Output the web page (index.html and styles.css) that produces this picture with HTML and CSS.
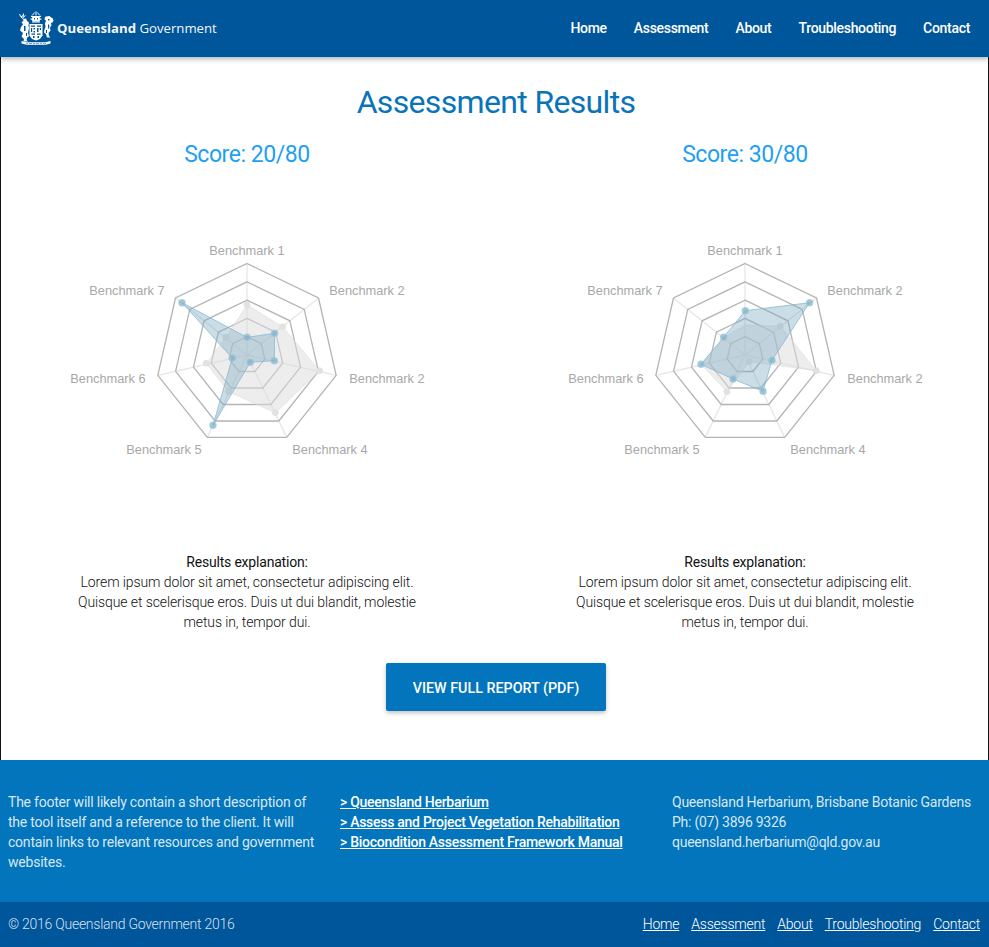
FILE: index.html
```html
<!DOCTYPE html>
<html>
<head>
	<title>Assessment Results</title>
	<link rel="stylesheet" href="styles.css">
</head>
<body>
	<!-- Navigation Bar -->
	<header class="site-header">
		<a class="brand" href="#">
			<svg class="crest" viewBox="0 0 36 34" width="36" height="34">
				<!-- crown and helmet -->
				<g fill="none" stroke="#fff" stroke-width="1">
					<path d="M14 4.500c1-2 2-1 2.500-3M18 .500v4M22 4.500c-1-2-2-1-2.500-3M13 5.500h10M12.500 8c2 1 9 1 11 0M14 11h8"/>
				</g>
				<path fill="#fff" d="M15 5.500h6l1.500 2-1 3h-7l-1-3z"/>
				<path fill="#00569b" d="M16 7h1v1.500h-1zM19 7h1v1.500h-1z"/>
				<!-- stag -->
				<path fill="none" stroke="#fff" stroke-width="1" d="M1.500 3l1.500 3 2.500-2M5.500 2.500L5 6.500l2.500-2M3 6l2.500 2"/>
				<path fill="#fff" d="M5 8l3-.500 1 2.500 2 1.500-.500 3 .500 3-1 4 1 4-1.500.500-1 3 1.500 1.500H5.500l.500-2.500-2.500-2.500L5 22l-3-2.500 1-3.500 2-2.500-1.500-2.500 2-1z"/>
				<path fill="#00569b" d="M6 15h1.500v5H6zM8 22h1v3H8z"/>
				<!-- lion -->
				<path fill="#fff" d="M28 5.500l3.500-.500 1.500 1.500 1.500.500 1 2.500-1 2-1.500.500.500 2.500-1.500 2 .500 3-2 2.500.500 3 1.500 1.500h-3.500l-1-3.500-2-1.500.500-3 1-2.500-.500-3.500 1-3-1.500-1 .500-2.500z"/>
				<path fill="#00569b" d="M30 8h1.500v1.500H30zM30 13.500h1.200v4H30zM28 19h1v3h-1z"/>
				<!-- shield -->
				<path fill="#fff" d="M11.500 13h13v11.500l-2.500 3.500-4 1.500-4-1.500-2.500-3.500z"/>
				<g fill="#00569b">
					<path d="M13 14.500h4v1.200h-4zM19 14.500h4v1.200h-4zM13 17h1.200v4H13zM15.500 17h1.500v1.500h-1.500zM19 17h1.500v4H19zM21.800 17H23v2h-1.200zM15.500 20h1.500v1.500h-1.500z"/>
					<path d="M13.500 22.500h3.500v1.200h-3.500zM19 22.500h3.500v1.200H19zM15 25h1.500v2H15zM19.500 25H21v2h-1.500z"/>
				</g>
				<!-- motto ribbon -->
				<path fill="#fff" d="M3.500 30l5 1.200h19l5-1.200v2.500l-5 1.300h-19l-5-1.300z"/>
				<path fill="#00569b" d="M8 32h2v.6H8zM11 32h3v.6h-3zM15 32h2v.6h-2zM18 32h3v.6h-3zM22 32h2v.6h-2zM25 32h3v.6h-3z"/>
			</svg>
			<span class="brand-name"><b>Queensland</b> Government</span>
		</a>
		<nav class="main-nav">
			<a href="#">Home</a>
			<a href="#">Assessment</a>
			<a href="#">About</a>
			<a href="#">Troubleshooting</a>
			<a href="#">Contact</a>
		</nav>
	</header>

	<main class="content">
		<div class="results">
			<h1>Assessment Results</h1>

			<div class="result-columns">
				<!-- First assessment -->
				<section class="result">
					<h2>Score: 20/80</h2>
					<svg class="radar" viewBox="-238 -175 476 360" width="476" height="360">
						<g id="radar-grid">
							<g class="spokes">
								<line x2="0" y2="-91.500"/>
								<line x2="71.500" y2="-57"/>
								<line x2="89.200" y2="20.400"/>
								<line x2="39.700" y2="82.400"/>
								<line x2="-39.700" y2="82.400"/>
								<line x2="-89.200" y2="20.400"/>
								<line x2="-71.500" y2="-57"/>
							</g>
							<g class="rings">
								<polygon points="0,-18.300 14.300,-11.400 17.800,4.100 7.900,16.500 -7.900,16.500 -17.800,4.100 -14.300,-11.400"/>
								<polygon points="0,-36.600 28.600,-22.800 35.700,8.100 15.900,33 -15.900,33 -35.700,8.100 -28.600,-22.800"/>
								<polygon points="0,-54.900 42.900,-34.200 53.500,12.200 23.800,49.500 -23.800,49.500 -53.500,12.200 -42.900,-34.200"/>
								<polygon points="0,-73.200 57.200,-45.600 71.400,16.300 31.800,66 -31.800,66 -71.400,16.300 -57.200,-45.600"/>
								<polygon points="0,-91.500 71.500,-57 89.200,20.400 39.700,82.400 -39.700,82.400 -89.200,20.400 -71.500,-57"/>
							</g>
						</g>
						<polygon class="area-grey" points="0,-50 35.600,-28.300 72.600,15.700 28.300,57.700 -18.400,36.700 -40.700,8.300 -21,-17.700"/>
						<g class="dots-grey">
							<circle cx="0" cy="-50" r="3"/>
							<circle cx="35.600" cy="-28.300" r="3"/>
							<circle cx="72.600" cy="15.700" r="3"/>
							<circle cx="28.300" cy="57.700" r="3"/>
							<circle cx="-18.400" cy="36.700" r="3"/>
							<circle cx="-40.700" cy="8.300" r="3"/>
							<circle cx="-21" cy="-17.700" r="3"/>
						</g>
						<polygon class="area-blue" points="0,-17.700 27.600,-21.700 27.300,5.700 3.300,7.300 -34,70.300 -14.700,3 -65,-52.300"/>
						<g class="dots-blue">
							<circle cx="0" cy="-17.700" r="3"/>
							<circle cx="27.600" cy="-21.700" r="3"/>
							<circle cx="27.300" cy="5.700" r="3"/>
							<circle cx="3.300" cy="7.300" r="3"/>
							<circle cx="-34" cy="70.300" r="3"/>
							<circle cx="-14.700" cy="3" r="3"/>
							<circle cx="-65" cy="-52.300" r="3"/>
						</g>
						<g class="labels">
							<text x="0" y="-100">Benchmark 1</text>
							<text x="120" y="-60.500">Benchmark 2</text>
							<text x="140" y="27.500">Benchmark 2</text>
							<text x="83" y="98.500">Benchmark 4</text>
							<text x="-83" y="98.500">Benchmark 5</text>
							<text x="-139" y="27.500">Benchmark 6</text>
							<text x="-120" y="-60.500">Benchmark 7</text>
						</g>
					</svg>
					<p class="explanation">
						<strong>Results explanation:</strong><br>
						Lorem ipsum dolor sit amet, consectetur adipiscing elit. Quisque et scelerisque eros. Duis ut dui blandit, molestie metus in, tempor dui.
					</p>
				</section>

				<!-- Second assessment -->
				<section class="result">
					<h2>Score: 30/80</h2>
					<svg class="radar" viewBox="-238 -175 476 360" width="476" height="360">
						<use href="#radar-grid"/>
						<polygon class="area-grey" points="0,-30 35.300,-29 71.300,15.700 4.300,6.700 -18,36.700 -44,9.300 -21,-17.700"/>
						<g class="dots-grey">
							<circle cx="35.300" cy="-29" r="3"/>
							<circle cx="71.300" cy="15.700" r="3"/>
							<circle cx="4.300" cy="6.700" r="3"/>
							<circle cx="-18" cy="36.700" r="3"/>
						</g>
						<polygon class="area-blue" points="0.300,-44.300 64.600,-52.300 27,5.300 18,36.300 -12,24 -44,9.300 -21.400,-17.700"/>
						<g class="dots-blue">
							<circle cx="0.300" cy="-44.300" r="3"/>
							<circle cx="64.600" cy="-52.300" r="3"/>
							<circle cx="27" cy="5.300" r="3"/>
							<circle cx="18" cy="36.300" r="3"/>
							<circle cx="-12" cy="24" r="3"/>
							<circle cx="-44" cy="9.300" r="3"/>
							<circle cx="-21.400" cy="-17.700" r="3"/>
						</g>
						<g class="labels">
							<text x="0" y="-100">Benchmark 1</text>
							<text x="120" y="-60.500">Benchmark 2</text>
							<text x="140" y="27.500">Benchmark 2</text>
							<text x="83" y="98.500">Benchmark 4</text>
							<text x="-83" y="98.500">Benchmark 5</text>
							<text x="-139" y="27.500">Benchmark 6</text>
							<text x="-120" y="-60.500">Benchmark 7</text>
						</g>
					</svg>
					<p class="explanation">
						<strong>Results explanation:</strong><br>
						Lorem ipsum dolor sit amet, consectetur adipiscing elit. Quisque et scelerisque eros. Duis ut dui blandit, molestie metus in, tempor dui.
					</p>
				</section>
			</div>

			<a class="report-button" href="#">View full report (PDF)</a>
		</div>
	</main>

	<footer>
		<div class="footer-top">
			<p class="footer-about">The footer will likely contain a short description of the tool itself and a reference to the client. It will contain links to relevant resources and government websites.</p>
			<ul class="footer-links">
				<li><a href="#">&gt; Queensland Herbarium</a></li>
				<li><a href="#">&gt; Assess and Project Vegetation Rehabilitation</a></li>
				<li><a href="#">&gt; Biocondition Assessment Framework Manual</a></li>
			</ul>
			<p class="footer-contact">Queensland Herbarium, Brisbane Botanic Gardens<br>Ph: (07) 3896 9326<br>queensland.herbarium@qld.gov.au</p>
		</div>
		<div class="footer-bottom">
			<span>© 2016 Queensland Government 2016</span>
			<nav class="footer-nav">
				<a href="#">Home</a>
				<a href="#">Assessment</a>
				<a href="#">About</a>
				<a href="#">Troubleshooting</a>
				<a href="#">Contact</a>
			</nav>
		</div>
	</footer>
</body>
</html>
```

FILE: styles.css
```css
body {
	margin: 0;
	font-family: Roboto, "Liberation Sans", sans-serif;
	font-size: 14px;
	letter-spacing: -0.2px;
	line-height: 20px;
	background-color: #fff;
	color: #111;
}

a {
	color: inherit;
}

/* Header */
.site-header {
	position: relative;
	z-index: 1;
	display: flex;
	align-items: center;
	justify-content: space-between;
	height: 57px;
	padding: 0 19px 0 18px;
	background-color: #00569b;
	box-shadow: 0 2px 5px rgba(0, 0, 0, 0.3);
}

.brand {
	display: flex;
	align-items: center;
	gap: 3px;
	padding-bottom: 2px;
	color: #fff;
	text-decoration: none;
	letter-spacing: 0;
}

.brand-name {
	font-family: "Open Sans", sans-serif;
	font-size: 13.200px;
	font-weight: 400;
	opacity: 0.95;
}

.brand-name b {
	font-weight: 700;
}

.main-nav {
	display: flex;
	gap: 27px;
	padding-bottom: 2px;
	letter-spacing: -0.31px;
}

.main-nav a {
	color: #fff;
	font-weight: 500;
	text-decoration: none;
}

/* Results */
.content {
	height: 703px;
	box-sizing: border-box;
	padding: 26px 0 0 8px;
	border-left: 1px solid #111;
	border-right: 1px solid #111;
}

.results {
	width: 974px;
	text-align: center;
}

h1 {
	margin: 0;
	font-size: 32px;
	font-weight: 400;
	letter-spacing: -0.66px;
	line-height: 38px;
	color: #0a74b9;
}

.result-columns {
	display: grid;
	grid-template-columns: 476px 476px;
	gap: 22px;
	margin-top: 20px;
}

.result h2 {
	margin: 0 0 11px;
	font-size: 23px;
	font-weight: 400;
	letter-spacing: -0.45px;
	line-height: 28px;
	color: #1e9ff2;
}

.radar {
	display: block;
}

.spokes line {
	stroke: #e6e6e6;
	stroke-width: 1.300;
}

.rings polygon {
	fill: none;
	stroke: #b4b4b4;
	stroke-width: 1.300;
}

.area-grey {
	fill: rgba(220, 220, 220, 0.5);
	stroke: rgba(220, 220, 220, 0.6);
}

.dots-grey circle {
	fill: #e2e2e2;
	stroke: rgba(220, 220, 220, 0.6);
}

.area-blue {
	fill: rgba(125, 172, 197, 0.4);
	stroke: rgba(135, 185, 210, 0.8);
}

.dots-blue circle {
	fill: rgba(125, 175, 200, 0.7);
	stroke: rgba(150, 195, 215, 0.7);
	stroke-width: 1.500;
}

.labels text {
	font-family: "Liberation Sans", Arial, sans-serif;
	font-size: 12.800px;
	letter-spacing: 0;
	fill: #a8a8a8;
	text-anchor: middle;
}

.explanation {
	width: 350px;
	margin: 12px auto 0;
	font-weight: 300;
	letter-spacing: -0.1px;
}

.explanation strong {
	font-weight: 400;
	letter-spacing: -0.2px;
}

.report-button {
	display: block;
	width: 220px;
	height: 48px;
	margin: 31px auto 0;
	border-radius: 2px;
	background-color: #0275bd;
	color: #fff;
	font-size: 14.300px;
	font-weight: 500;
	letter-spacing: 0;
	line-height: 50px;
	text-decoration: none;
	text-transform: uppercase;
	box-shadow: 0 2px 4px rgba(0, 0, 0, 0.25);
}

/* Footer */
.footer-top {
	display: grid;
	grid-template-columns: repeat(3, 316px);
	gap: 16px;
	height: 142px;
	box-sizing: border-box;
	padding: 32px 0 0 8px;
	background-color: #0275bd;
	color: rgba(255, 255, 255, 0.85);
}

.footer-about,
.footer-contact {
	margin: 0;
	letter-spacing: -0.22px;
}

.footer-contact {
	letter-spacing: -0.25px;
}

.footer-links {
	list-style: none;
	margin: 0;
	padding: 0;
	color: #fff;
	font-weight: 500;
	letter-spacing: -0.28px;
}

.footer-bottom {
	display: flex;
	align-items: center;
	justify-content: space-between;
	height: 43px;
	padding: 0 9px 2px 8px;
	background-color: #00569b;
	color: rgba(255, 255, 255, 0.85);
	font-weight: 300;
	letter-spacing: -0.26px;
}

.footer-nav {
	display: flex;
	gap: 12px;
	color: #fff;
	letter-spacing: -0.22px;
}
```
